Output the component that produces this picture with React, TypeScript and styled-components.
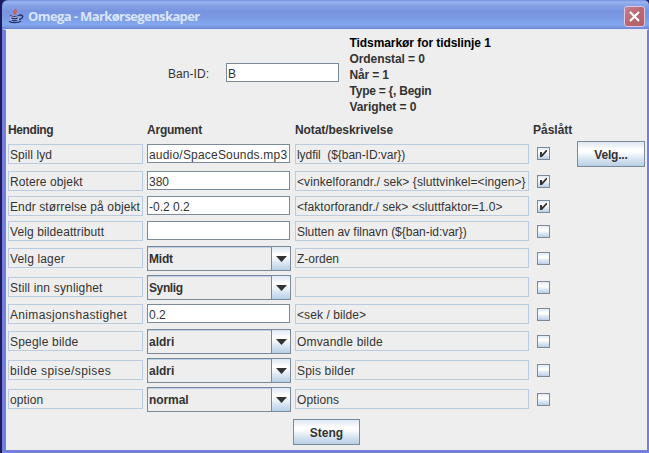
import React from 'react';
import styled, { createGlobalStyle, css } from 'styled-components';

const Global = createGlobalStyle`
  * { box-sizing: border-box; }
  html, body { margin: 0; padding: 0; overflow: hidden; }
  body { font: 12px/16px "Liberation Sans", Arial, sans-serif; color: #333; background: #23236b; }
`;

const oceanGradient = css`
  background: linear-gradient(#dde8f3 0%, #ffffff 32%, #ffffff 40%, #dbe7f3 68%, #b8cfe5 100%);
`;

const Window = styled.div`
  width: 649px;
  height: 453px;
  display: flex;
  flex-direction: column;
  border-left: 2px solid #1e1a62;
`;

const TitleBar = styled.header`
  height: 29px;
  display: flex;
  align-items: center;
  padding: 3px 4px 0 6px;
  border-radius: 6px 5px 0 0;
  background: linear-gradient(#7290dc 0, #9ab4f2 2px, #86a3e8 5px, #7994df 11px, #7b98e2 17px, #82a8ee 24px, #7f9fe6 26px, #7183d4 29px);
`;

const JavaIcon = styled.svg`
  width: 16px;
  height: 16px;
  flex: none;
`;

const Title = styled.h1`
  margin: 0 auto 0 4px;
  font: bold 13px/18px "Open Sans", "Noto Sans", sans-serif;
  letter-spacing: -0.61px;
  color: #d9e6fd;
  white-space: nowrap;
`;

const CloseButton = styled.button`
  width: 21px;
  height: 21px;
  padding: 0;
  display: grid;
  place-items: center;
  border: 1px solid #dcc6e2;
  border-radius: 3px;
  background: linear-gradient(135deg, #c68391, #b96770 50%, #b25f68);
`;

const Body = styled.main`
  flex: 1;
  display: flex;
  flex-direction: column;
  padding: 5px 2px 0 2px;
  background: #eee;
  border: solid #747edb;
  border-width: 0 2px 3px 4px;
  border-top: 1px solid #e8e9f7;
`;

const Summary = styled.section`
  height: 85px;
  display: flex;
  align-items: flex-start;
  padding-left: 160px;
`;

const FieldLabel = styled.label<{ $track: number }>`
  width: 58px;
  margin-top: 31px;
  letter-spacing: ${p => p.$track}px;
`;

const Info = styled.div`
  margin-left: 10.5px;
  font-weight: bold;
`;

const InfoLine = styled.div<{ $track: number; $strong?: boolean }>`
  color: ${p => (p.$strong ? '#000' : '#333')};
  letter-spacing: ${p => p.$track}px;
  white-space: pre;
`;

const Table = styled.section`
  display: grid;
  grid-template-columns: 135px 144px 234px 40px 68px;
  grid-template-rows: 20px 28px 26px 24px 26px 28px 30px 24px 30px 28px 30px;
  column-gap: 4px;
  align-items: center;
`;

const Heading = styled.div<{ $track: number }>`
  font-weight: bold;
  letter-spacing: ${p => p.$track}px;
  white-space: nowrap;
`;

const Cell = styled.div<{ $track: number }>`
  height: 20px;
  padding: 1px 0 0 1px;
  border: 1px solid #bacde0;
  line-height: 18px;
  letter-spacing: ${p => p.$track}px;
  white-space: pre;
  overflow: hidden;
`;

const Field = styled.input<{ $track?: number; $width: number; $top?: number }>`
  width: ${p => p.$width}px;
  height: 19px;
  margin: ${p => p.$top ?? 0}px 0 1px;
  padding: 2px 0 0 1px;
  border: 1px solid #7a8a99;
  border-radius: 0;
  outline: 0;
  background: #fff;
  color: #333;
  font: 12px/15px "Liberation Sans", Arial, sans-serif;
  letter-spacing: ${p => p.$track ?? 0}px;
`;

const Combo = styled.div<{ $track: number }>`
  height: 25px;
  margin-top: 1px;
  display: flex;
  justify-content: space-between;
  border: 1px solid #7a8a99;
  box-shadow: inset 0 1px #b8cfe5;
  padding-left: 1px;
  font-weight: bold;
  line-height: 24px;
  letter-spacing: ${p => p.$track}px;
`;

const ComboArrow = styled.span`
  width: 19px;
  display: grid;
  place-items: center;
  border-left: 1px solid #7a8a99;
  ${oceanGradient}
`;

const Check = styled.span<{ $up: boolean }>`
  width: 13px;
  height: 13px;
  margin: ${p => (p.$up ? '0 0 1px 4px' : '1px 0 0 4px')};
  border: 1px solid #7a8a99;
  display: grid;
  place-items: center;
  ${oceanGradient}
`;

const Button = styled.button<{ $width: number; $track: number }>`
  width: ${p => p.$width}px;
  height: 26px;
  padding: 1px 0 0;
  border: 1px solid #7a8a99;
  border-radius: 0;
  color: #333;
  font: bold 12px/16px "Liberation Sans", Arial, sans-serif;
  letter-spacing: ${p => p.$track}px;
  ${oceanGradient}
`;

const Footer = styled.footer`
  display: flex;
  padding: 5px 0 0 285px;
`;

type Row = {
  name: string; nameTrack: number;
  kind: 'field' | 'combo'; value: string; valueTrack: number;
  note: string; noteTrack: number;
  on?: boolean; action?: string;
};

const rows: Row[] = [
  { name: 'Spill lyd', nameTrack: 0.08, kind: 'field', value: 'audio/SpaceSounds.mp3', valueTrack: 0.2, note: 'lydfil  (${ban-ID:var})', noteTrack: -0.05, on: true, action: 'Velg...' },
  { name: 'Rotere objekt', nameTrack: 0.1, kind: 'field', value: '380', valueTrack: 0, note: '<vinkelforandr./ sek> {sluttvinkel=<ingen>}', noteTrack: 0.08, on: true },
  { name: 'Endr størrelse på objekt', nameTrack: 0.11, kind: 'field', value: '-0.2 0.2', valueTrack: 0, note: '<faktorforandr./ sek> <sluttfaktor=1.0>', noteTrack: 0.06, on: true },
  { name: 'Velg bildeattributt', nameTrack: 0.11, kind: 'field', value: '', valueTrack: 0, note: 'Slutten av filnavn (${ban-id:var})', noteTrack: -0.03 },
  { name: 'Velg lager', nameTrack: 0.15, kind: 'combo', value: 'Midt', valueTrack: -0.2, note: 'Z-orden', noteTrack: 0 },
  { name: 'Still inn synlighet', nameTrack: 0.17, kind: 'combo', value: 'Synlig', valueTrack: -0.4, note: '', noteTrack: 0 },
  { name: 'Animasjonshastighet', nameTrack: 0.34, kind: 'field', value: '0.2', valueTrack: 0, note: '<sek / bilde>', noteTrack: 0.08 },
  { name: 'Spegle bilde', nameTrack: 0.2, kind: 'combo', value: 'aldri', valueTrack: 0, note: 'Omvandle bilde', noteTrack: 0.18 },
  { name: 'bilde spise/spises', nameTrack: 0.4, kind: 'combo', value: 'aldri', valueTrack: 0, note: 'Spis bilder', noteTrack: 0.18 },
  { name: 'option', nameTrack: 0.1, kind: 'combo', value: 'normal', valueTrack: -0.08, note: 'Options', noteTrack: 0.1 },
];

const info = [
  { text: 'Tidsmarkør for tidslinje 1', track: -0.07 },
  { text: 'Ordenstal = 0', track: -0.08 },
  { text: 'Når = 1', track: -0.15 },
  { text: 'Type = {, Begin', track: -0.24 },
  { text: 'Varighet = 0', track: -0.08 },
];

const headings = [
  { text: 'Hending', track: -0.4 },
  { text: 'Argument', track: -0.22 },
  { text: 'Notat/beskrivelse', track: -0.08 },
  { text: 'Påslått', track: 0 },
  { text: '', track: 0 },
];

const Cup = () => (
  <JavaIcon viewBox="0 0 16 16" fill="none">
    <path d="M2.500 7.500h8v3.200c0 1.200-.8 1.800-1.800 1.800H4.500c-1.200 0-2-.6-2-1.800z" fill="#d3def8" />
    <path d="M2 7.500c2 1 6.500 1 9 0M3 9.800c2 .8 5 .8 7 0M3.500 12c2 .7 4 .7 6 0M1 13.500c3 1.500 9 1.500 12-.2M11 7.500c2.700-1.300 4.600.5 3.200 2.300-.8 1-1.900 1.500-3.200 1.700" stroke="#252c6c" strokeWidth="1.300" />
    <path d="M7.500.5c1 1.500-2.500 2.500-1.800 4 .3.900 1 1.300 1 2M9 3c-2 1-1.800 2-1 3" stroke="#d8583f" strokeWidth="1.400" />
  </JavaIcon>
);

const Tick = () => (
  <svg width="11" height="11" viewBox="0 0 11 11">
    <path d="M2 4h2v2.300L8 2h1v1.500L4 9H2z" fill="#333" />
  </svg>
);

export default function App() {
  return (
    <>
      <Global />
      <Window>
        <TitleBar>
          <Cup />
          <Title>Omega - Markørsegenskaper</Title>
          <CloseButton aria-label="Lukk">
            <svg width="13" height="13" viewBox="0 0 13 13">
              <path d="M2 2l9 9M11 2l-9 9" stroke="#fff" strokeWidth="2.200" />
            </svg>
          </CloseButton>
        </TitleBar>
        <Body>
          <Summary>
            <FieldLabel $track={0.05} htmlFor="ban">Ban-ID:</FieldLabel>
            <Field id="ban" $width={113} $top={28} defaultValue="B" />
            <Info>
              {info.map((line, i) => (
                <InfoLine key={line.text} $track={line.track} $strong={i === 0}>{line.text}</InfoLine>
              ))}
            </Info>
          </Summary>
          <Table>
            {headings.map((h, i) => <Heading key={i} $track={h.track}>{h.text}</Heading>)}
            {rows.map((r, i) => (
              <React.Fragment key={r.name}>
                <Cell $track={r.nameTrack}>{r.name}</Cell>
                {r.kind === 'field' ? (
                  <Field $width={143} $track={r.valueTrack} defaultValue={r.value} />
                ) : (
                  <Combo $track={r.valueTrack}>
                    {r.value}
                    <ComboArrow>
                      <svg width="11" height="6" viewBox="0 0 11 6"><path d="M0 0h11L5.500 6z" fill="#333" /></svg>
                    </ComboArrow>
                  </Combo>
                )}
                <Cell $track={r.noteTrack}>{r.note}</Cell>
                <Check $up={i === 0}>{r.on && <Tick />}</Check>
                {r.action ? <Button $width={68} $track={-0.2}>{r.action}</Button> : <span />}
              </React.Fragment>
            ))}
          </Table>
          <Footer>
            <Button $width={67} $track={0}>Steng</Button>
          </Footer>
        </Body>
      </Window>
    </>
  );
}
